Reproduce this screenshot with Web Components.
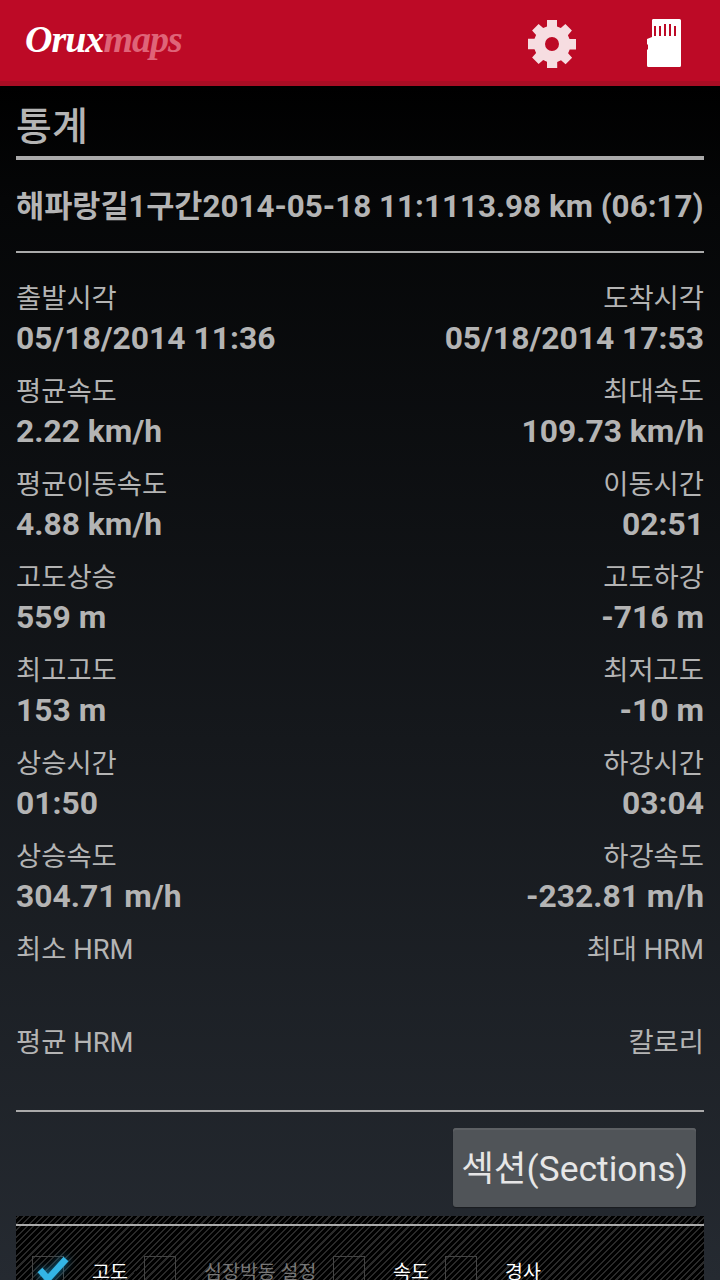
<!DOCTYPE html>
<html>
<head>
<meta charset="utf-8">
<style>
html, body { margin: 0; padding: 0; background: #000; }
body { width: 720px; height: 1280px; overflow: hidden; font-family: Roboto, "Noto Sans CJK KR", sans-serif; }
</style>
</head>
<body>
<app-screen>
  <top-bar></top-bar>
  <stats-title>통계</stats-title>
  <track-line></track-line>
  <stats-grid>
    <stat-row l1="출발시각" v1="05/18/2014 11:36" l2="도착시각" v2="05/18/2014 17:53"></stat-row>
    <stat-row l1="평균속도" v1="2.22 km/h" l2="최대속도" v2="109.73 km/h"></stat-row>
    <stat-row l1="평균이동속도" v1="4.88 km/h" l2="이동시간" v2="02:51"></stat-row>
    <stat-row l1="고도상승" v1="559 m" l2="고도하강" v2="-716 m"></stat-row>
    <stat-row l1="최고고도" v1="153 m" l2="최저고도" v2="-10 m"></stat-row>
    <stat-row l1="상승시간" v1="01:50" l2="하강시간" v2="03:04"></stat-row>
    <stat-row l1="상승속도" v1="304.71 m/h" l2="하강속도" v2="-232.81 m/h"></stat-row>
    <stat-row l1="최소 HRM" v1="" l2="최대 HRM" v2=""></stat-row>
    <stat-row l1="평균 HRM" v1="" l2="칼로리" v2=""></stat-row>
  </stats-grid>
  <section-bar>섹션(Sections)</section-bar>
  <graph-panel></graph-panel>
</app-screen>

<script>
// page shell with the dark gradient
class AppScreen extends HTMLElement {
  constructor() {
    super();
    this.attachShadow({ mode: 'open' });
    this.shadowRoot.innerHTML = `
      <style>
        :host { display: flex; flex-direction: column; width: 720px; height: 1280px; overflow: hidden;
                background: linear-gradient(#000 86px, #050607 200px, #252a31 1280px); }
      </style>
      <slot></slot>`;
  }
}

// red header, logo on the left and two icons on the right
class TopBar extends HTMLElement {
  constructor() {
    super();
    this.attachShadow({ mode: 'open' });
    this.shadowRoot.innerHTML = `
      <style>
        :host { display: flex; align-items: center; height: 81px; flex: none; background: #bd0a26;
                border-bottom: 5px solid #a90d24; }
        .logo { margin: 0 0 0 25px; font: italic bold 38px/1 "Liberation Serif", serif; letter-spacing: -1px;
                color: #fff; padding-bottom: 4px; }
        .logo span { color: #df6478; }
        .gear { margin-left: auto; width: 48px; height: 48px; display: block; position: relative; top: 3px; }
        .card { margin: 0 39px 0 71px; width: 34px; height: 48px; display: block; position: relative; top: 2.500px; }
      </style>
      <div class="logo">Orux<span>maps</span></div>
      <svg class="gear" viewBox="0 0 48 48">
        <path fill="#f6dde1" fill-rule="evenodd" d="M19 0h10v6.500l3.800 1.600 4.600-4 6.500 6.500-4 4.600 1.600 3.800H48v10.400h-6.300l-1.600 3.800 4 4.600-6.500 6.500-4.600-4-3.800 1.600V48H19v-6.300l-3.800-1.600-4.600 4-6.500-6.500 4-4.600-1.600-3.800H0V18.800h6.500l1.600-3.800-4-4.600 6.500-6.500 4.600 4L19 6.500zM24 17a7 7 0 1 0 0 14 7 7 0 0 0 0-14z"/>
      </svg>
      <svg class="card" viewBox="0 0 34 48">
        <path fill="#fff" d="M6 0h26.500q1.500 0 1.500 1.500V46.500q0 1.500-1.500 1.500H1.500Q0 48 0 46.500V31l1-1V26l-1-1v-5l5-2V1.500Q5 0 6 0z"/>
        <g fill="#bd0a26">
          <rect x="7" y="7" width="2" height="10"/><rect x="12" y="7" width="2" height="10"/>
          <rect x="17" y="5" width="2" height="12"/><rect x="22" y="5" width="2" height="12"/>
          <rect x="27" y="7" width="2" height="10"/>
        </g>
      </svg>`;
  }
}

// page title with thick rule under it
class StatsTitle extends HTMLElement {
  constructor() {
    super();
    this.attachShadow({ mode: 'open' });
    this.shadowRoot.innerHTML = `
      <style>
        :host { display: block; flex: none; margin: 0 16px; height: 74px; box-sizing: border-box;
                padding-top: 19px; border-bottom: 4px solid #aaa;
                font: 500 39px/44px Roboto, "Noto Sans CJK KR", sans-serif; color: #b4b4b4; }
      </style>
      <slot></slot>`;
  }
}

// track name, date and distance, all one bold line
class TrackLine extends HTMLElement {
  constructor() {
    super();
    this.attachShadow({ mode: 'open' });
    this.shadowRoot.innerHTML = `
      <style>
        :host { display: block; flex: none; margin: 0 16px; height: 93px;
                box-sizing: border-box; padding-top: 27px; border-bottom: 2px solid #aaa;
                font: bold 31.400px/40px Roboto, "Noto Sans CJK KR", sans-serif; color: #b4b4b4; white-space: nowrap; }
        .name { font-size: 30.600px; }
      </style>
      <span class="name">해파랑길1구간</span>2014-05-18 11:1113.98 km (06:17)`;
  }
}

class StatsGrid extends HTMLElement {
  constructor() {
    super();
    this.attachShadow({ mode: 'open' });
    this.shadowRoot.innerHTML = `
      <style>
        :host { display: flex; flex-direction: column; flex: none; margin: 0 16px; height: 859px;
                box-sizing: border-box; padding-top: 24px; border-bottom: 2px solid #aaa; }
      </style>
      <slot></slot>`;
  }
}

class StatRow extends HTMLElement {
  constructor() {
    super();
    this.attachShadow({ mode: 'open' });
    const get = n => this.getAttribute(n) || '';
    this.shadowRoot.innerHTML = `
      <style>
        :host { display: flex; justify-content: space-between; height: 93px; flex: none; color: #b4b4b4;
                font-family: Roboto, "Noto Sans CJK KR", sans-serif; white-space: nowrap; }
        .r { text-align: right; }
        .l { font-size: 27.400px; line-height: 44px; height: 41px; }
        .v { font-size: 31.800px; line-height: 41px; font-weight: bold; }
      </style>
      <div><div class="l">${get('l1')}</div><div class="v">${get('v1')}</div></div>
      <div class="r"><div class="l">${get('l2')}</div><div class="v">${get('v2')}</div></div>`;
  }
}

class SectionBar extends HTMLElement {
  constructor() {
    super();
    this.attachShadow({ mode: 'open' });
    this.shadowRoot.innerHTML = `
      <style>
        :host { display: flex; flex: none; align-items: flex-start; justify-content: flex-end; padding: 16px 24px 0 0; height: 80px; }
        button { width: 243px; height: 79px; padding: 5px 0 0; border: 0; border-radius: 3px; color: #e6e6e6;
                 background: #505458; box-shadow: inset 0 2px 0 #5d6064, 0 1px 1px #1a1c20;
                 font: 35.500px/1 Roboto, "Noto Sans CJK KR", sans-serif; white-space: nowrap; }
      </style>
      <button><slot></slot></button>`;
  }
}

class GraphPanel extends HTMLElement {
  constructor() {
    super();
    this.attachShadow({ mode: 'open' });
    this.shadowRoot.innerHTML = `
      <style>
        :host { display: block; flex: none; margin: 8px 16px 0; height: 64px; box-sizing: border-box; padding-top: 8px; overflow: hidden;
                background: repeating-linear-gradient(-45deg, #000 0 3px, #2a2a2a 3px 4.500px); }
        .rule { height: 2px; background: #aaa; }
        .opts { display: flex; align-items: flex-start; margin-top: 30px; font: 19.500px/24px Roboto, "Noto Sans CJK KR", sans-serif; color: #fff; white-space: nowrap; }
        .box { position: relative; flex: none; width: 30px; height: 30px; border: 1px solid #444; }
        .box svg { position: absolute; left: 4px; top: -4px; width: 32px; height: 32px; overflow: visible; }
        .lbl { flex: none; margin-top: 5px; }
        .dim { color: #777; }
      </style>
      <div class="rule"></div>
      <div class="opts">
        <div class="box" style="margin-left:16px"><svg viewBox="0 0 32 32"><path d="M3 17l8 9L29 6" fill="none" stroke="#33b5e5" stroke-width="6.500" style="filter:drop-shadow(0 0 4px #1f86b0)"/></svg></div>
        <span class="lbl" style="margin-left:28px;width:52px">고도</span>
        <div class="box"></div>
        <span class="lbl dim" style="margin-left:28px;width:129px">심장박동 설정</span>
        <div class="box"></div>
        <span class="lbl" style="margin-left:28px;width:52px">속도</span>
        <div class="box"></div>
        <span class="lbl" style="margin-left:28px">경사</span>
      </div>`;
  }
}

customElements.define('app-screen', AppScreen);
customElements.define('top-bar', TopBar);
customElements.define('stats-title', StatsTitle);
customElements.define('track-line', TrackLine);
customElements.define('stats-grid', StatsGrid);
customElements.define('stat-row', StatRow);
customElements.define('section-bar', SectionBar);
customElements.define('graph-panel', GraphPanel);
</script>
</body>
</html>
